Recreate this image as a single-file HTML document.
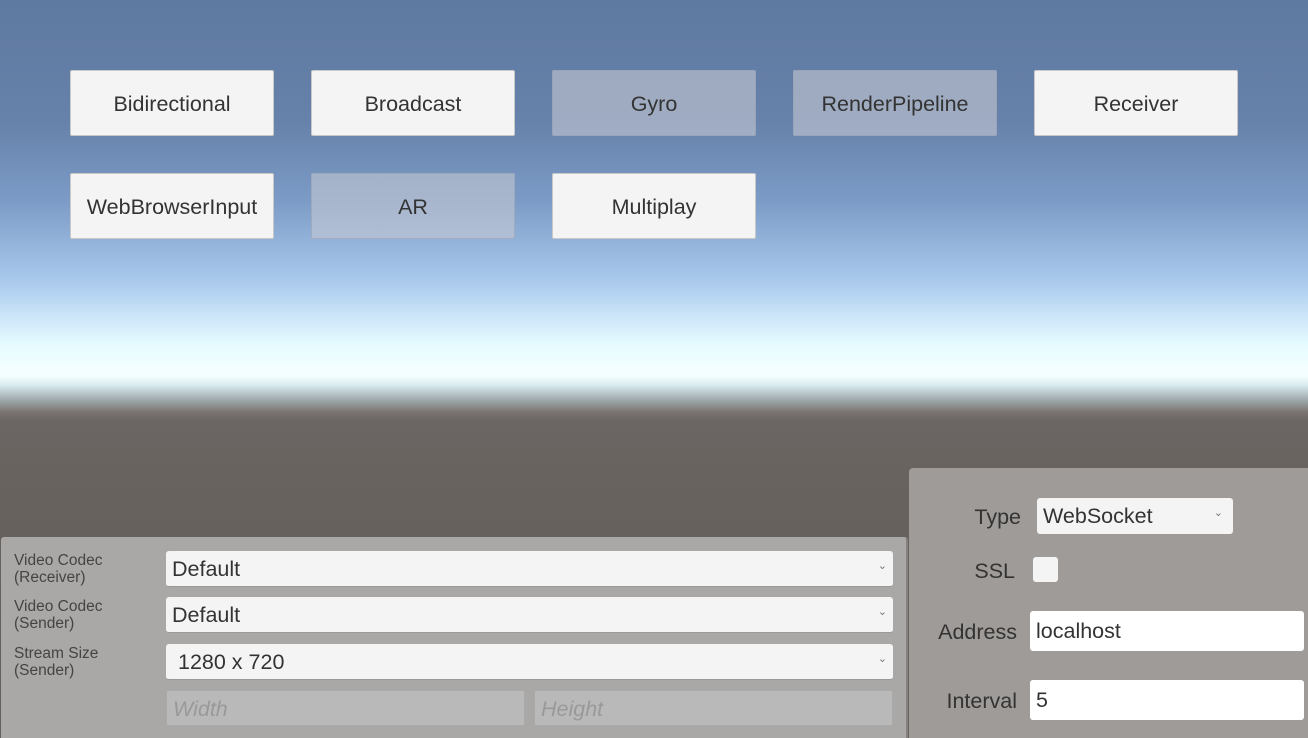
<!DOCTYPE html>
<html><head><meta charset="utf-8"><style>
*{margin:0;padding:0;box-sizing:border-box}
body{width:1308px;height:738px;overflow:hidden;position:relative;font-family:"Liberation Sans",sans-serif;
background:linear-gradient(to bottom,#5f7aa0 0px,#6681aa 120px,#7b9bc6 200px,#a8c8ec 280px,#cfe8fa 320px,#e6fcff 345px,#f6ffff 375px,#d8ecf0 385px,#9fa9ab 400px,#7a7472 412px,#6b6563 420px,#67615d 530px,#65605b 738px)}
.b{position:absolute;width:204px;height:66px;background:#f4f4f4;border-radius:2px;border:1px solid #c8c8c8;color:#333;font-size:21.5px;display:flex;align-items:center;justify-content:center;padding-top:2px}
.d{background:rgba(196,200,210,0.6);border-color:rgba(150,160,180,0.6)}
.lp{position:absolute;left:1px;top:537px;width:907px;height:201px;background:#aaa8a6;border-radius:3px 3px 0 0;border-right:2px solid #858180}
.rp{position:absolute;left:909px;top:468px;width:399px;height:270px;background:#9f9b98;border-radius:4px 0 0 0}
.lab{position:absolute;font-size:15.5px;color:#444;line-height:17px}
.dd{position:absolute;left:166px;width:727px;height:36px;background:#f4f4f4;border-radius:3px;border-bottom:1px solid #999;font-size:21.5px;color:#333;padding-left:6px;line-height:37px}
.dd:after{content:"⌄";position:absolute;right:6px;top:-3px;font-size:11px;color:#777}
.f{position:absolute;top:690px;height:36px;background:#b9b9b9;border:1px solid #a9a9a9;border-radius:2px;font-size:21.5px;font-style:italic;color:#999;padding-left:6px;line-height:37px}
.rl{position:absolute;font-size:21.5px;color:#333;text-align:right}
.in{position:absolute;background:#fff;border-radius:3px;font-size:21.5px;color:#333;padding-left:6px}
</style></head><body>
<div class="b" style="left:70px;top:70px">Bidirectional</div>
<div class="b" style="left:311px;top:70px">Broadcast</div>
<div class="b d" style="left:552px;top:70px">Gyro</div>
<div class="b d" style="left:793px;top:70px">RenderPipeline</div>
<div class="b" style="left:1034px;top:70px">Receiver</div>
<div class="b" style="left:70px;top:173px">WebBrowserInput</div>
<div class="b d" style="left:311px;top:173px">AR</div>
<div class="b" style="left:552px;top:173px">Multiplay</div>

<div class="lp"></div>
<div class="lab" style="left:14px;top:552px">Video Codec<br>(Receiver)</div>
<div class="lab" style="left:14px;top:598px">Video Codec<br>(Sender)</div>
<div class="lab" style="left:14px;top:645px">Stream Size<br>(Sender)</div>
<div class="dd" style="top:551px">Default</div>
<div class="dd" style="top:597px">Default</div>
<div class="dd" style="top:644px;padding-left:12px">1280 x 720</div>
<div class="f" style="left:166px;width:359px">Width</div>
<div class="f" style="left:534px;width:359px">Height</div>

<div class="rp"></div>
<div class="rl" style="left:920px;width:101px;top:505px">Type</div>
<div class="in" style="left:1037px;top:498px;width:196px;height:36px;line-height:37px;background:#f4f4f4">WebSocket<span style="position:absolute;right:10px;top:-3px;font-size:11px;color:#777">⌄</span></div>
<div class="rl" style="left:920px;width:95px;top:559px">SSL</div>
<div class="in" style="left:1033px;top:557px;width:25px;height:25px;background:#f4f4f4"></div>
<div class="rl" style="left:910px;width:107px;top:620px">Address</div>
<div class="in" style="left:1030px;top:611px;width:274px;height:40px;line-height:41px">localhost</div>
<div class="rl" style="left:910px;width:107px;top:689px">Interval</div>
<div class="in" style="left:1030px;top:680px;width:274px;height:40px;line-height:41px">5</div>
</body></html>
